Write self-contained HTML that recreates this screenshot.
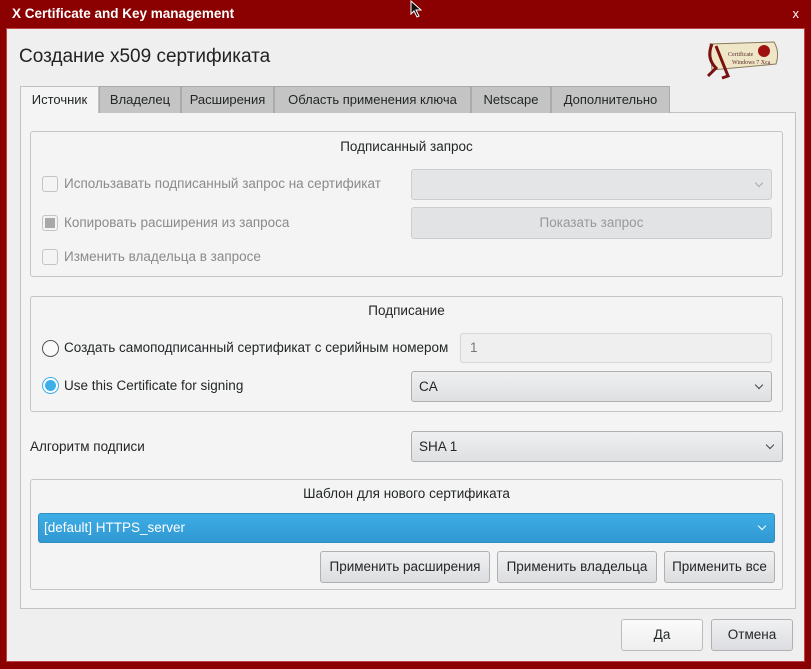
<!DOCTYPE html>
<html><head><meta charset="utf-8"><style>
*{box-sizing:border-box;margin:0;padding:0}
body{width:811px;height:669px;background:#8b0000;font-family:"Liberation Sans",sans-serif;font-size:13.5px;color:#232627;position:relative;overflow:hidden}
.a{position:absolute}
.title{left:12px;top:6px;color:#fff;font-weight:bold;font-size:13.5px}
.close{right:12px;top:6px;color:#fff;font-size:13px}
.win{left:6px;top:28px;width:799px;height:634px;background:#efefef;border:1px solid #b44}
.panel{left:20px;top:112px;width:776px;height:497px;background:#f4f4f4;border:1px solid #c2c2c2}
.tab{top:86px;height:27px;background:#c4c4c4;border:1px solid #aaa;border-bottom:none;line-height:26px;text-align:center;font-size:13px}
.tab.s{background:#f4f4f4;height:27px;top:86px;border-color:#c2c2c2}
.grp{border:1px solid #c6c6c6;border-radius:3px;background:#f4f4f4}
.gt{width:100%;text-align:center}
.cb{width:16px;height:16px;border:1px solid #c4c4c4;border-radius:3px;background:#f4f4f4}
.dis{color:#8a8a8a}
.combo{height:31px;border:1px solid #b0b0b0;border-radius:3px;background:linear-gradient(#eeeff0,#dfe0e2);line-height:29px;padding-left:7px}
.combo.d{border-color:#cdcdcd;background:#e4e5e6;color:#999}
.arr{position:absolute;right:9px;top:10px;width:6px;height:6px;border-right:1.2px solid #444;border-bottom:1.2px solid #444;transform:rotate(45deg)}
.btn{height:32px;border:1px solid #b0b0b0;border-radius:3px;background:linear-gradient(#f0f1f2,#dcdde0);line-height:30px;text-align:center}
.rad{width:17px;height:17px;border-radius:50%;border:1px solid #555;background:#fafafa}
</style></head><body>
<div class="a title">X Certificate and Key management</div>
<div class="a close">x</div>
<div class="a win"></div>
<div class="a" style="left:19px;top:46px;font-size:19px;color:#222">Создание x509 сертификата</div>
<svg class="a" style="left:698px;top:38px" width="82" height="42" viewBox="0 0 82 42">
<path d="M12 6 L76 4 Q82 14 78 26 L14 32 Z" fill="#efe6c8" stroke="#8a7a5a" stroke-width="1"/>
<path d="M14 6 Q8 20 18 30 L10 38 M18 8 L30 38 L24 40" fill="none" stroke="#7a1010" stroke-width="3"/>
<circle cx="66" cy="13" r="6" fill="#a01010"/>
<text x="30" y="18" font-size="6" fill="#5a2a2a" font-family="Liberation Serif">Certificate</text>
<text x="34" y="26" font-size="6" fill="#5a2a2a" font-family="Liberation Serif">Windows 7 Xca</text>
</svg>
<div class="a panel"></div>
<div class="a tab s" style="left:20px;width:79px">Источник</div>
<div class="a tab" style="left:99px;width:82px">Владелец</div>
<div class="a tab" style="left:181px;width:93px">Расширения</div>
<div class="a tab" style="left:274px;width:197px">Область применения ключа</div>
<div class="a tab" style="left:471px;width:80px">Netscape</div>
<div class="a tab" style="left:551px;width:119px">Дополнительно</div>

<div class="a grp" style="left:30px;top:131px;width:753px;height:146px"></div>
<div class="a gt" style="left:30px;top:139px;width:753px">Подписанный запрос</div>
<div class="a cb" style="left:42px;top:176px"></div>
<div class="a dis" style="left:64px;top:176px">Использавать подписанный запрос на сертификат</div>
<div class="a combo d" style="left:411px;top:169px;width:361px"><span class="arr" style="border-color:#aaa"></span></div>
<div class="a cb" style="left:42px;top:215px"><div style="margin:2px;width:10px;height:10px;background:#a8a8a8"></div></div>
<div class="a dis" style="left:64px;top:215px">Копировать расширения из запроса</div>
<div class="a btn dis" style="left:411px;top:207px;width:361px;border-color:#cdcdcd;background:#e2e3e4;color:#999">Показать запрос</div>
<div class="a cb" style="left:42px;top:249px"></div>
<div class="a dis" style="left:64px;top:249px">Изменить владельца в запросе</div>

<div class="a grp" style="left:30px;top:296px;width:753px;height:116px"></div>
<div class="a gt" style="left:30px;top:303px;width:753px">Подписание</div>
<div class="a rad" style="left:42px;top:340px"></div>
<div class="a" style="left:64px;top:340px">Создать самоподписанный сертификат с серийным номером</div>
<div class="a" style="left:460px;top:333px;width:312px;height:30px;border:1px solid #d6d6d6;border-radius:3px;background:#efefef;color:#777;line-height:28px;padding-left:9px">1</div>
<div class="a rad" style="left:42px;top:377px;border-color:#3daee9;background:#fff"><div style="margin:2px;width:11px;height:11px;border-radius:50%;background:#3daee9"></div></div>
<div class="a" style="left:64px;top:378px">Use this Certificate for signing</div>
<div class="a combo" style="left:411px;top:371px;width:361px">CA<span class="arr"></span></div>

<div class="a" style="left:30px;top:439px">Алгоритм подписи</div>
<div class="a combo" style="left:411px;top:431px;width:372px">SHA 1<span class="arr"></span></div>

<div class="a grp" style="left:30px;top:479px;width:753px;height:111px"></div>
<div class="a gt" style="left:30px;top:486px;width:753px">Шаблон для нового сертификата</div>
<div class="a" style="left:38px;top:513px;width:737px;height:30px;border:1px solid #2f8fc4;border-radius:3px;background:linear-gradient(#3dade6,#3198d2);color:#fff;line-height:28px;padding-left:5px">[default] HTTPS_server<span class="arr" style="border-color:#fff;top:9px"></span></div>
<div class="a btn" style="left:320px;top:551px;width:170px">Применить расширения</div>
<div class="a btn" style="left:497px;top:551px;width:160px">Применить владельца</div>
<div class="a btn" style="left:664px;top:551px;width:111px">Применить все</div>

<div class="a btn" style="left:621px;top:619px;width:82px;background:linear-gradient(#fbfbfb,#eeeeee);border-color:#bbb">Да</div>
<div class="a btn" style="left:711px;top:619px;width:82px">Отмена</div>
<svg class="a" style="left:410px;top:0" width="14" height="18" viewBox="0 0 14 18"><path d="M1 1 L1 14 L4 11 L7 17 L9 16 L6 10 L11 10 Z" fill="#111" stroke="#fff" stroke-width="1"/></svg>
</body></html>
